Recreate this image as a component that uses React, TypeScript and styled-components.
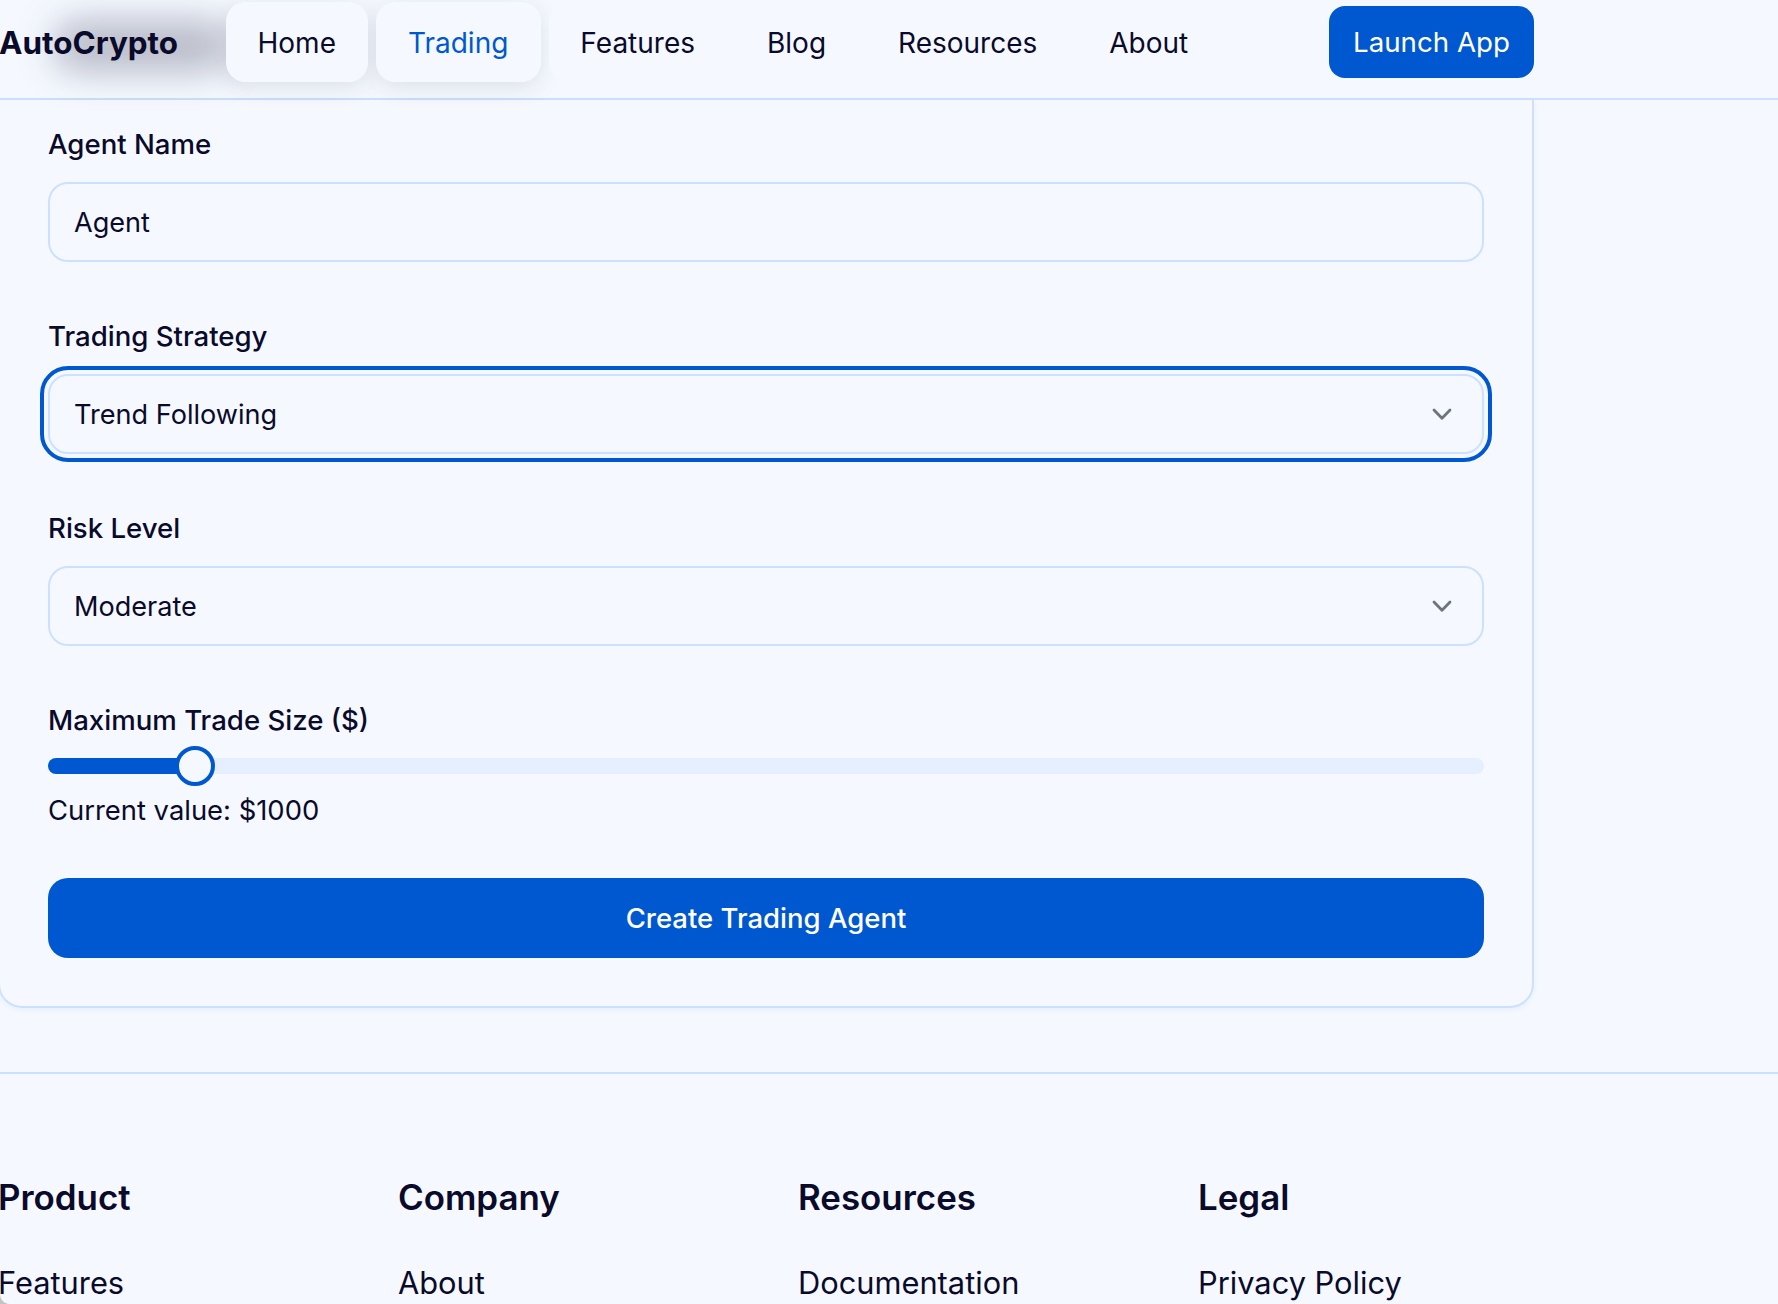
import styled, { createGlobalStyle } from 'styled-components';

const colors = {
  page: '#f5f9ff',
  ink: '#0a0a2a',
  blue: '#0058d0',
  line: '#cce0ff',
  track: '#e6efff',
  chevron: '#6f7280',
  windowCorner: '#c4c4c4',
};

const GlobalStyle = createGlobalStyle`
  html, body {
    margin: 0;
    height: 100%;
    overflow: hidden;
    background: ${colors.page};
  }
  body {
    font-family: Inter, "Liberation Sans", sans-serif;
    color: ${colors.ink};
  }
  * {
    box-sizing: border-box;
  }
`;

const Page = styled.div`
  position: relative;
  width: 1778px;
  height: 1304px;
  overflow: hidden;
  background: ${colors.page};
`;

const WindowCorner = styled.div`
  position: absolute;
  left: 0;
  bottom: 0;
  width: 10px;
  height: 10px;
  background: radial-gradient(circle at top right, transparent 9.5px, ${colors.windowCorner} 10.5px);
`;

const Header = styled.header`
  height: 100px;
  padding-top: 2px;
  border-bottom: 2px solid ${colors.line};
`;

const HeaderRow = styled.div`
  display: flex;
  align-items: flex-start;
  width: 1534px;
`;

const Logo = styled.div`
  position: relative;
  display: flex;
  align-items: center;
  width: 226px;
  height: 80px;
  padding-top: 1px;
  font-size: 31.4px;
  font-weight: 700;

  /* the blurred smudge behind the logo in the capture */
  &::before {
    content: '';
    position: absolute;
    left: 52px;
    top: 18px;
    width: 180px;
    height: 52px;
    border-radius: 26px;
    background: rgba(10, 10, 42, 0.26);
    filter: blur(18px);
  }
`;

const LogoText = styled.span`
  position: relative;
  margin-left: -1px;
`;

const Nav = styled.nav`
  display: flex;
  gap: 8px;
  isolation: isolate;
`;

const NavItem = styled.a<{ $active?: boolean; $raised?: boolean }>`
  position: relative;
  display: flex;
  align-items: center;
  height: 80px;
  padding: 1px 32.5px 0 31.5px;
  border-radius: 20px;
  font-size: 28px;
  color: ${(p) => (p.$active ? colors.blue : colors.ink)};
  background: ${colors.page};

  &::before {
    content: '';
    position: absolute;
    inset: 0;
    z-index: -1;
    border-radius: inherit;
    box-shadow: ${(p) => (p.$raised ? '0 5px 24px rgba(10, 10, 42, 0.11)' : 'none')};
  }
`;

const LaunchButton = styled.button`
  margin: 4px 0 0 auto;
  width: 205px;
  height: 72px;
  padding: 0;
  border: 0;
  border-radius: 16px;
  background: ${colors.blue};
  color: #fff;
  font: 400 27.7px Inter, sans-serif;
`;

const Card = styled.section`
  width: 1536px;
  margin-left: -2px;
  padding: 0 48px 48px;
  border: 2px solid ${colors.line};
  border-top: 0;
  border-radius: 0 0 24px 24px;
  box-shadow: 0 2px 6px rgba(0, 88, 208, 0.06);
`;

const Field = styled.div`
  display: flex;
  flex-direction: column;
  height: 192px;
  padding-top: 26px;
`;

const Label = styled.label`
  height: 36px;
  margin-bottom: 20px;
  line-height: 36px;
  font-size: 27.6px;
  font-weight: 500;
`;

const InputBox = styled.div<{ $focused?: boolean }>`
  display: flex;
  align-items: center;
  justify-content: space-between;
  height: 80px;
  padding: 1px 28px 0 24px;
  border: 2px solid ${colors.line};
  border-radius: 20px;
  font-size: 27.1px;
  outline: ${(p) => (p.$focused ? `4px solid ${colors.blue}` : 'none')};
  outline-offset: 4px;
`;

const Chevron = styled.svg`
  width: 24px;
  height: 24px;
  color: ${colors.chevron};
`;

const SliderField = styled.div`
  display: flex;
  flex-direction: column;
  padding-top: 26px;
`;

const SliderTrack = styled.div`
  position: relative;
  height: 16px;
  margin-bottom: 18px;
  border-radius: 8px;
  background: ${colors.track};
`;

const SliderFill = styled.div`
  height: 100%;
  border-radius: 8px;
  background: ${colors.blue};
`;

const SliderThumb = styled.div`
  position: absolute;
  top: -12px;
  width: 40px;
  height: 40px;
  margin-left: -20px;
  border: 4px solid ${colors.blue};
  border-radius: 50%;
  background: ${colors.page};
`;

const Value = styled.div`
  height: 36px;
  line-height: 36px;
  font-size: 27.4px;
`;

const SubmitButton = styled.button`
  display: block;
  width: 100%;
  height: 80px;
  margin-top: 50px;
  padding: 0;
  border: 0;
  border-radius: 20px;
  background: ${colors.blue};
  color: #fff;
  font: 500 27.5px Inter, sans-serif;
`;

const Footer = styled.footer`
  margin-top: 64px;
  padding-top: 99px;
  border-top: 2px solid ${colors.line};
`;

const FooterGrid = styled.div`
  display: grid;
  grid-template-columns: repeat(4, 400px);
  margin-left: -2px;
`;

const FooterTitle = styled.h3`
  margin: 0 0 40px;
  line-height: 48px;
  font-size: 34.9px;
  font-weight: 600;
`;

const FooterLink = styled.a`
  display: block;
  line-height: 44px;
  font-size: 30.8px;
`;

const footerColumns = [
  { title: 'Product', link: 'Features' },
  { title: 'Company', link: 'About' },
  { title: 'Resources', link: 'Documentation' },
  { title: 'Legal', link: 'Privacy Policy' },
];

const maxTradeShare = 0.1027;

function ChevronIcon() {
  return (
    <Chevron viewBox="0 0 24 24" fill="none" stroke="currentColor" strokeWidth="2.8" strokeLinecap="round" strokeLinejoin="round">
      <path d="M4 7 12 15.3 20 7" />
    </Chevron>
  );
}

export default function App() {
  return (
    <Page>
      <GlobalStyle />
      <Header>
        <HeaderRow>
          <Logo>
            <LogoText>AutoCrypto</LogoText>
          </Logo>
          <Nav>
            <NavItem $raised>Home</NavItem>
            <NavItem $active $raised>Trading</NavItem>
            <NavItem>Features</NavItem>
            <NavItem>Blog</NavItem>
            <NavItem>Resources</NavItem>
            <NavItem>About</NavItem>
          </Nav>
          <LaunchButton>Launch App</LaunchButton>
        </HeaderRow>
      </Header>
      <Card>
        <Field>
          <Label>Agent Name</Label>
          <InputBox>Agent</InputBox>
        </Field>
        <Field>
          <Label>Trading Strategy</Label>
          <InputBox $focused>
            Trend Following
            <ChevronIcon />
          </InputBox>
        </Field>
        <Field>
          <Label>Risk Level</Label>
          <InputBox>
            Moderate
            <ChevronIcon />
          </InputBox>
        </Field>
        <SliderField>
          <Label as="div">Maximum Trade Size ($)</Label>
          <SliderTrack>
            <SliderFill style={{ width: `${maxTradeShare * 100}%` }} />
            <SliderThumb style={{ left: `${maxTradeShare * 100}%` }} />
          </SliderTrack>
          <Value>Current value: $1000</Value>
        </SliderField>
        <SubmitButton>Create Trading Agent</SubmitButton>
      </Card>
      <Footer>
        <FooterGrid>
          {footerColumns.map((column) => (
            <div key={column.title}>
              <FooterTitle>{column.title}</FooterTitle>
              <FooterLink>{column.link}</FooterLink>
            </div>
          ))}
        </FooterGrid>
      </Footer>
      <WindowCorner />
    </Page>
  );
}
